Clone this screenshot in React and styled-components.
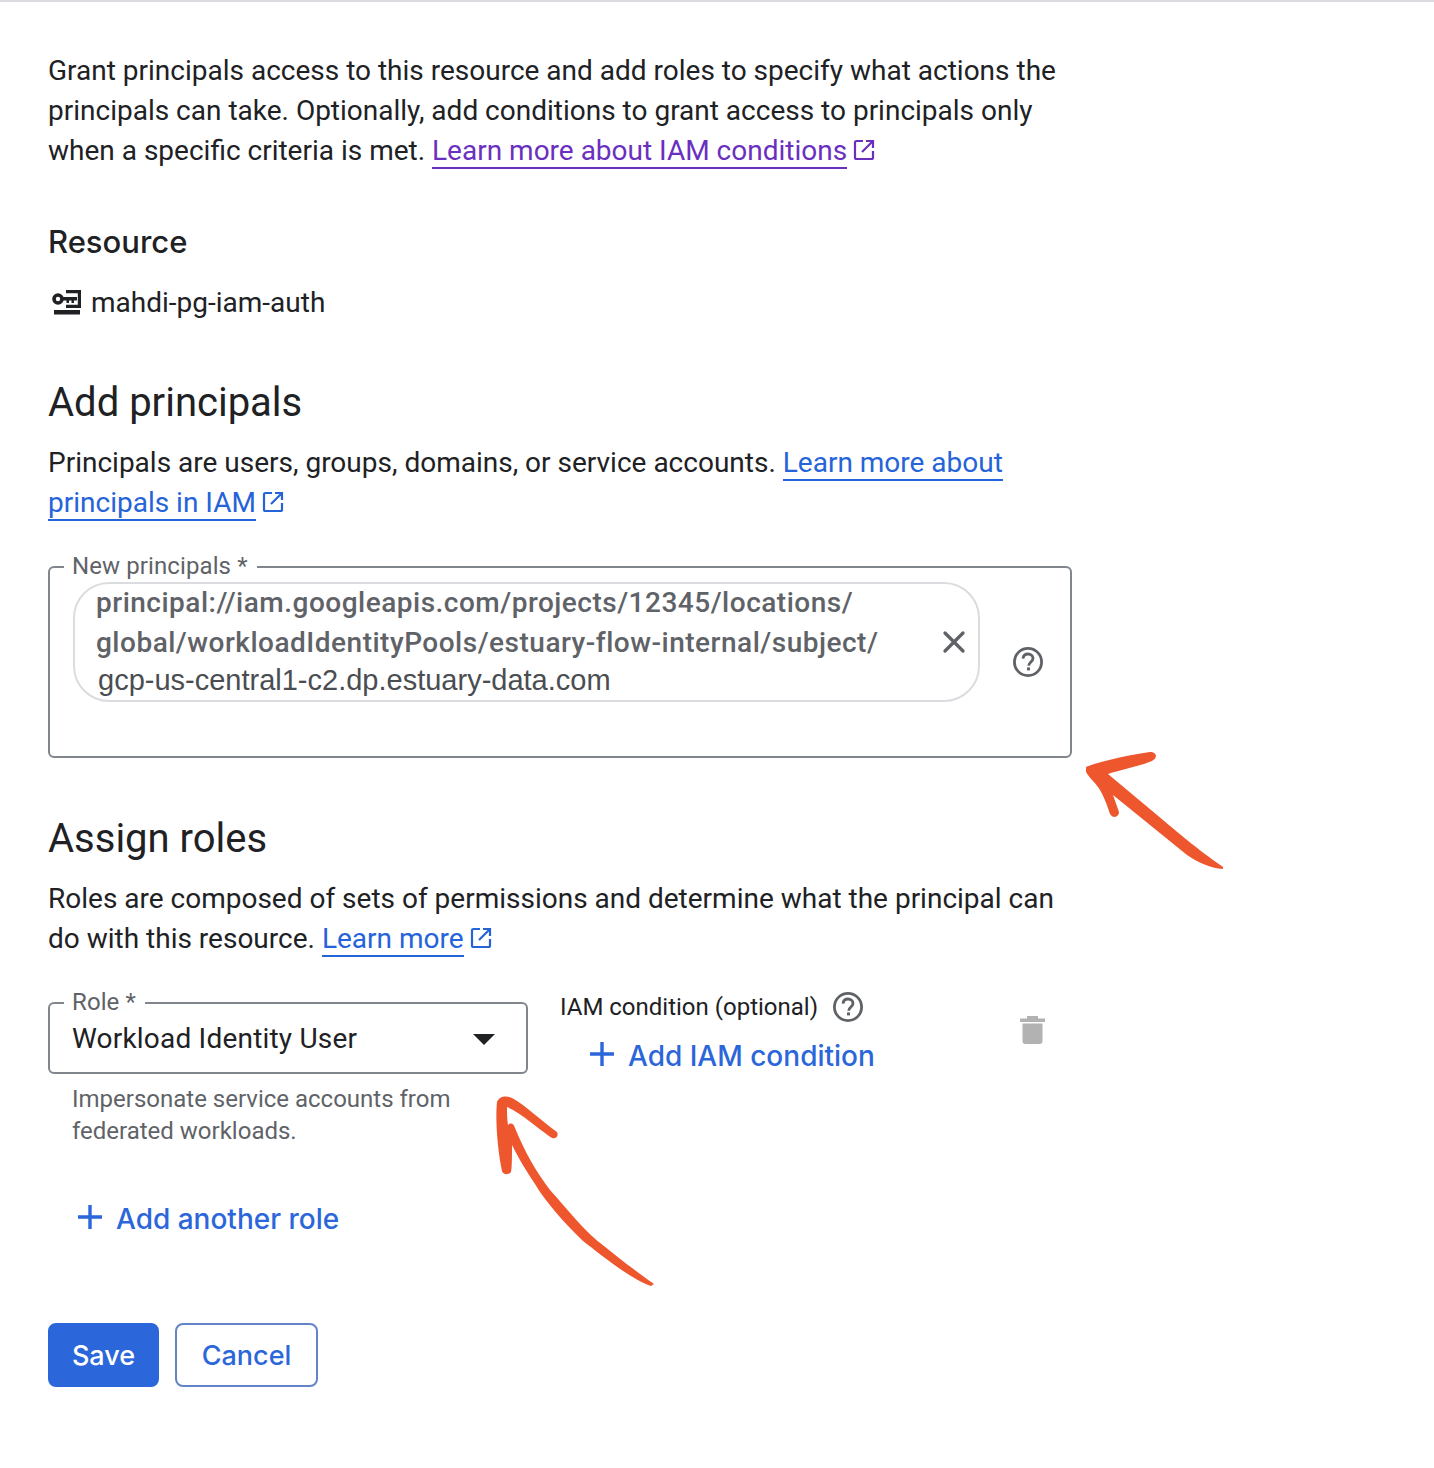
import styled, { createGlobalStyle } from "styled-components";
import { X } from "lucide-react";

const GlobalStyle = createGlobalStyle`
  html, body {
    margin: 0;
    padding: 0;
    background: #fff;
  }
  * {
    box-sizing: border-box;
  }
`;

const Page = styled.div`
  position: relative;
  width: 1434px;
  height: 1468px;
  overflow: hidden;
  border-top: 2px solid #dadce0;
  padding: 49px 0 0 48px;
  font-family: Roboto, "Liberation Sans", sans-serif;
  font-size: 28px;
  line-height: 40px;
  color: #202124;
`;

const Paragraph = styled.p`
  width: 1024px;
  margin: 0;
`;

const Link = styled.a`
  color: ${(props) => (props.visited ? "#6b2fbf" : "#2563d9")};
  text-decoration: none;
  border-bottom: 2px solid currentColor;
`;

const ExternalIcon = styled.svg`
  width: 22px;
  height: 22px;
  margin-left: 6px;
  vertical-align: -1px;
  color: ${(props) => (props.visited ? "#6b2fbf" : "#2563d9")};
`;

const SubHeading = styled.h3`
  margin: 51px 0 0;
  font-family: Inter, Roboto, sans-serif;
  font-size: 31px;
  font-weight: 500;
  line-height: 40px;
`;

const ResourceRow = styled.div`
  display: flex;
  align-items: center;
  gap: 10px;
  margin-top: 21px;
  padding-left: 3px;
`;

const Heading = styled.h2`
  margin: ${(props) => props.top}px 0 16px;
  font-family: Roboto, sans-serif;
  font-size: 40px;
  font-weight: 400;
  line-height: 48px;
`;

const OutlinedField = styled.div`
  position: relative;
  border: 2px solid #80868b;
  border-radius: 6px;
`;

const PrincipalsField = styled(OutlinedField)`
  display: flex;
  align-items: flex-start;
  width: 1024px;
  height: 192px;
  margin-top: 43px;
  padding: 14px 0 0 23px;
`;

const FieldLabel = styled.span`
  position: absolute;
  top: -16px;
  left: 14px;
  padding: 0 9px 0 8px;
  background: #fff;
  font-size: 24px;
  line-height: 28px;
  letter-spacing: 0.1px;
  color: #5f6368;
`;

const Chip = styled.div`
  position: relative;
  flex: none;
  width: 907px;
  height: 120px;
  border: 2px solid #dadce0;
  border-radius: 36px;
  padding: 0 0 0 21px;
  font-weight: 500;
  letter-spacing: 0.5px;
  color: #5f6368;
`;

const ChipLine = styled.div`
  margin-top: ${(props) => props.top || 0}px;
  white-space: nowrap;
`;

const PastedLine = styled.div`
  margin: -3px 0 0 2px;
  font-family: "Liberation Sans", Arial, sans-serif;
  font-weight: 400;
  font-size: 29px;
  letter-spacing: 0;
  white-space: nowrap;
  color: #4a4d51;
`;

const ChipClose = styled(X)`
  position: absolute;
  right: 6px;
  top: 40px;
  color: #5f6368;
`;

const HelpIcon = styled.svg`
  flex: none;
  width: 32px;
  height: 32px;
  color: #5f6368;
`;

const PrincipalsHelp = styled.div`
  margin: 64px 0 0 32px;
  height: 36px;
`;

const RoleRow = styled.div`
  display: flex;
  align-items: flex-start;
  margin-top: 43px;
`;

const RoleColumn = styled.div`
  width: 480px;
`;

const RoleField = styled(OutlinedField)`
  display: flex;
  align-items: center;
  justify-content: space-between;
  height: 72px;
  padding: 2px 31px 0 22px;
  font-size: 28px;
  line-height: 66px;
  letter-spacing: 0.2px;
`;

const Caret = styled.span`
  width: 0;
  height: 0;
  border-left: 11px solid transparent;
  border-right: 11px solid transparent;
  border-top: 11px solid #202124;
`;

const HelperText = styled.div`
  margin-top: 9px;
  padding-left: 24px;
  font-size: 24px;
  line-height: 32px;
  color: #5f6368;
`;

const ConditionColumn = styled.div`
  width: 460px;
  margin: -13px 0 0 32px;
`;

const ConditionLabel = styled.div`
  display: flex;
  align-items: center;
  gap: 14px;
  font-size: 24px;
  line-height: 36px;
`;

const TextAction = styled.div`
  display: flex;
  align-items: center;
  gap: 14px;
  margin: ${(props) => props.margin};
  font-family: Inter, Roboto, sans-serif;
  font-size: 28px;
  line-height: 40px;
  font-weight: 500;
  color: #2b66da;
`;

const PlusIcon = styled.svg`
  flex: none;
  width: 24px;
  height: 24px;
  margin-top: -5px;
`;

const TrashIcon = styled.svg`
  width: 25px;
  height: 28px;
  margin-top: 14px;
  color: #b2b2b2;
`;

const ButtonRow = styled.div`
  display: flex;
  gap: 16px;
  margin-top: 84px;
`;

const Button = styled.button`
  width: ${(props) => (props.primary ? 111 : 143)}px;
  height: 64px;
  padding: 0;
  border: 2px solid ${(props) => (props.primary ? "#2b66da" : "#6484c7")};
  border-radius: 8px;
  background: ${(props) => (props.primary ? "#2b66da" : "#fff")};
  color: ${(props) => (props.primary ? "#fff" : "#2b66da")};
  font-family: Inter, Roboto, sans-serif;
  font-size: 27px;
  font-weight: 500;
`;

const Arrow = styled.svg`
  position: absolute;
  left: ${(props) => props.left}px;
  top: ${(props) => props.top}px;
`;

function External({ visited }) {
  return (
    <ExternalIcon viewBox="0 0 22 22" visited={visited} fill="none" stroke="currentColor" strokeWidth="2.2">
      <path d="M10 2H3.5A1.5 1.5 0 0 0 2 3.5v15A1.5 1.5 0 0 0 3.5 20h15a1.5 1.5 0 0 0 1.5-1.5V12" />
      <path d="M13 2h7v7M20 2 9 13" />
    </ExternalIcon>
  );
}

function Help() {
  return (
    <HelpIcon viewBox="0 0 32 32" fill="none">
      <circle cx="16" cy="16" r="13.6" stroke="currentColor" strokeWidth="2.8" />
      <path
        d="M11 12.6c.3-2.9 2.3-4.6 5-4.6 2.9 0 5 1.8 5 4.3 0 3.6-4.3 3.7-4.3 7.5"
        stroke="currentColor"
        strokeWidth="2.8"
      />
      <rect x="15" y="21.4" width="3" height="3" fill="currentColor" />
    </HelpIcon>
  );
}

function Plus() {
  return (
    <PlusIcon viewBox="0 0 24 24" fill="currentColor">
      <path d="M10.3 0h3.4v10.3H24v3.4H13.7V24h-3.4V13.7H0v-3.4h10.3z" />
    </PlusIcon>
  );
}

function KeyBoxIcon() {
  return (
    <svg width="30" height="26" viewBox="0 0 30 26" fill="none">
      <circle cx="7" cy="9" r="4" stroke="#202124" strokeWidth="3.6" />
      <path d="M10 7h16v3.5h-3V13h-2.5v-2.5H18V13h-2.5v-2.5H10z" fill="#202124" />
      <path d="M15 1.7h13.4v14.6H15" stroke="#202124" strokeWidth="3.2" />
      <rect x="3" y="20" width="26" height="4.5" fill="#202124" />
    </svg>
  );
}

export default function App() {
  return (
    <Page>
      <GlobalStyle />
      <Paragraph>
        Grant principals access to this resource and add roles to specify what actions the
        principals can take. Optionally, add conditions to grant access to principals only
        when a specific criteria is met. <Link visited>Learn more about IAM conditions</Link>
        <External visited />
      </Paragraph>

      <SubHeading>Resource</SubHeading>
      <ResourceRow>
        <KeyBoxIcon />
        mahdi-pg-iam-auth
      </ResourceRow>

      <Heading top={56}>Add principals</Heading>
      <Paragraph>
        Principals are users, groups, domains, or service accounts. <Link>Learn more about</Link>{" "}
        <Link>principals in IAM</Link>
        <External />
      </Paragraph>

      <PrincipalsField>
        <FieldLabel>New principals *</FieldLabel>
        <Chip>
          <ChipLine top={-1}>principal://iam.googleapis.com/projects/12345/locations/</ChipLine>
          <ChipLine>global/workloadIdentityPools/estuary-flow-internal/subject/</ChipLine>
          <PastedLine>gcp-us-central1-c2.dp.estuary-data.com</PastedLine>
          <ChipClose size={36} strokeWidth={2.2} />
        </Chip>
        <PrincipalsHelp>
          <Help />
        </PrincipalsHelp>
      </PrincipalsField>

      <Heading top={57}>Assign roles</Heading>
      <Paragraph>
        Roles are composed of sets of permissions and determine what the principal can
        do with this resource. <Link>Learn more</Link>
        <External />
      </Paragraph>

      <RoleRow>
        <RoleColumn>
          <RoleField>
            <FieldLabel>Role *</FieldLabel>
            Workload Identity User
            <Caret />
          </RoleField>
          <HelperText>
            Impersonate service accounts from
            <br />
            federated workloads.
          </HelperText>
        </RoleColumn>
        <ConditionColumn>
          <ConditionLabel>
            IAM condition (optional)
            <Help />
          </ConditionLabel>
          <TextAction margin="11px 0 0 30px">
            <Plus />
            Add IAM condition
          </TextAction>
        </ConditionColumn>
        <TrashIcon viewBox="0 0 25 28" fill="currentColor">
          <path d="M0 2.5h25v3.5H0zM7 0h11v2.5H7z" />
          <path d="M2.5 7.5h20v17.5a3 3 0 0 1-3 3h-14a3 3 0 0 1-3-3z" />
        </TrashIcon>
      </RoleRow>

      <TextAction margin="52px 0 0 30px">
        <Plus />
        Add another role
      </TextAction>

      <ButtonRow>
        <Button primary>Save</Button>
        <Button>Cancel</Button>
      </ButtonRow>

      <Arrow left={1080} top={745} width={150} height={128} viewBox="1080 745 150 128">
        <path
          fill="#ee562d"
          d="M1086 765C1100 759 1130 753 1150 750C1157 750 1158 756 1152 759C1140 764 1120 768 1108 772L1163 818C1175 828 1197 847 1223 865L1223 867C1210 866 1197 860 1187 853L1113 793L1119 810C1119 815 1113 817 1110 812C1107 803 1105 797 1100 788C1096 781 1090 777 1086 770Z"
        />
      </Arrow>
      <Arrow left={490} top={1090} width={170} height={200} viewBox="490 1090 170 200">
        <path
          fill="#ee562d"
          d="M497 1100C499 1095 505 1093 512 1096C525 1103 543 1120 557 1130C559 1134 556 1137 552 1136C540 1128 520 1110 507 1105C507 1110 507 1118 508 1123C511 1120 514 1122 515 1126C525 1150 535 1168 550 1188C568 1208 585 1230 604 1244C626 1262 640 1272 654 1282L651 1284C630 1277 600 1252 583 1239C565 1222 545 1199 535 1182C525 1167 518 1155 512 1143C512 1155 512 1165 511 1170C509 1173 503 1173 502 1169C498 1150 495 1120 497 1100Z"
        />
      </Arrow>
    </Page>
  );
}
